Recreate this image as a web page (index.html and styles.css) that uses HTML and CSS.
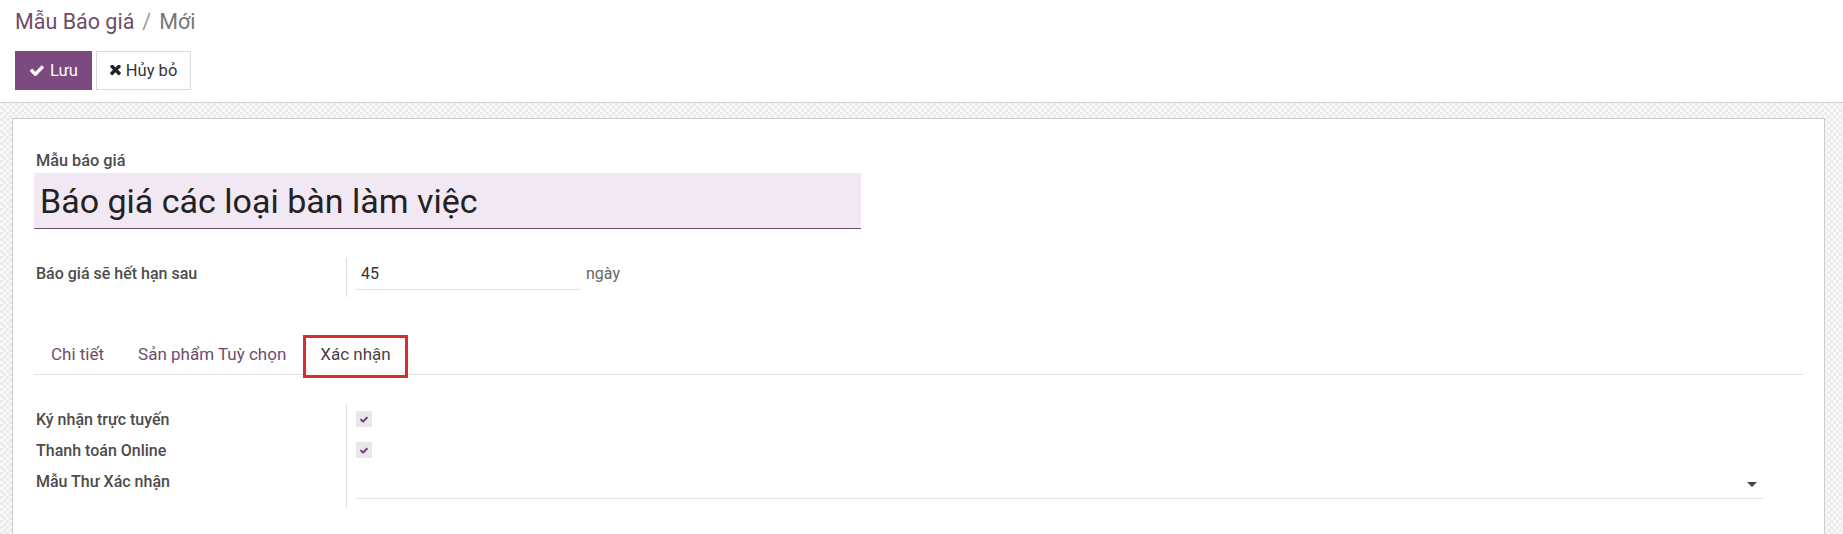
FILE: index.html
```html
<!DOCTYPE html>
<html lang="vi">
<head>
<meta charset="utf-8">
<title>Mẫu Báo giá / Mới</title>
<link rel="stylesheet" href="styles.css">
</head>
<body>
<header class="control-panel">
  <ol class="breadcrumb">
    <li class="crumb crumb-link">Mẫu Báo giá</li>
    <li class="crumb-sep">/</li>
    <li class="crumb crumb-active">Mới</li>
  </ol>
  <div class="buttons">
    <button class="btn btn-primary" type="button">
      <svg class="icon icon-check" viewBox="120 330 1560 1110" aria-hidden="true"><path d="M1671 566q0 40-28 68l-724 724-136 136q-28 28-68 28t-68-28l-136-136-362-362q-28-28-28-68t28-68l136-136q28-28 68-28t68 28l294 295 656-657q28-28 68-28t68 28l136 136q28 28 28 68z"/></svg>Lưu
    </button>
    <button class="btn btn-secondary" type="button">
      <svg class="icon icon-times" viewBox="100 330 1210 1160" aria-hidden="true"><path d="M1298 1202q0 40-28 68l-136 136q-28 28-68 28t-68-28l-294-294-294 294q-28 28-68 28t-68-28l-136-136q-28-28-28-68t28-68l294-294-294-294q-28-28-28-68t28-68l136-136q28-28 68-28t68 28l294 294 294-294q28-28 68-28t68 28l136 136q28 28 28 68t-28 68l-294 294 294 294q28 28 28 68z"/></svg>Hủy bỏ
    </button>
  </div>
</header>
<main class="content">
  <div class="sheet">
    <div class="title-label">Mẫu báo giá</div>
    <div class="title-field">Báo giá các loại bàn làm việc</div>

    <div class="group group-validity">
      <div class="cell-label">Báo giá sẽ hết hạn sau</div>
      <div class="cell-value">
        <span class="input input-days">45</span><span class="unit">ngày</span>
      </div>
    </div>

    <ul class="tabs">
      <li class="tab">Chi tiết</li>
      <li class="tab">Sản phẩm Tuỳ chọn</li>
      <li class="tab tab-active">Xác nhận</li>
    </ul>

    <div class="group group-confirm">
      <div class="cell-label">Ký nhận trực tuyến</div>
      <div class="cell-value">
        <span class="checkbox"><svg viewBox="120 330 1560 1110" aria-hidden="true"><path d="M1671 566q0 40-28 68l-724 724-136 136q-28 28-68 28t-68-28l-136-136-362-362q-28-28-28-68t28-68l136-136q28-28 68-28t68 28l294 295 656-657q28-28 68-28t68 28l136 136q28 28 28 68z"/></svg></span>
      </div>
      <div class="cell-label">Thanh toán Online</div>
      <div class="cell-value">
        <span class="checkbox"><svg viewBox="120 330 1560 1110" aria-hidden="true"><path d="M1671 566q0 40-28 68l-724 724-136 136q-28 28-68 28t-68-28l-136-136-362-362q-28-28-28-68t28-68l136-136q28-28 68-28t68 28l294 295 656-657q28-28 68-28t68 28l136 136q28 28 28 68z"/></svg></span>
      </div>
      <div class="cell-label cell-label-last">Mẫu Thư Xác nhận</div>
      <div class="cell-value cell-value-last">
        <span class="input select-field"><span class="caret"></span></span>
      </div>
    </div>
  </div>
</main>
</body>
</html>
```

FILE: styles.css
```css
* { box-sizing: border-box; }

html, body {
  margin: 0;
  padding: 0;
  background: #fff;
}

body {
  font-family: Roboto, "Noto Sans", "Liberation Sans", sans-serif;
  font-size: 16px;
  line-height: 24px;
  color: #4c4c4c;
  width: 1843px;
  height: 534px;
  overflow: hidden;
  display: flex;
  flex-direction: column;
}

/* ---------- control panel ---------- */
.control-panel {
  padding: 7px 15px 12px;
  border-bottom: 1px solid #cfcfcf;
  background: #fff;
}

.breadcrumb {
  list-style: none;
  margin: 0;
  padding: 0;
  display: flex;
  align-items: baseline;
  font-size: 21.5px;
  line-height: 30px;
}

.crumb-link { color: #6f4c6c; }
.crumb-sep { color: #9a9a9a; margin: 0 8px 0 8px; }
.crumb-active { color: #777; }

.buttons {
  display: flex;
  gap: 4px;
  margin-top: 14px;
}

.btn {
  font-family: inherit;
  font-size: 16.5px;
  line-height: 24px;
  height: 39px;
  margin: 0;
  display: flex;
  align-items: center;
  border-radius: 0;
  cursor: pointer;
}

.btn-primary {
  background: #7c4a7e;
  border: 1px solid #7c4a7e;
  color: #fff;
  padding: 0 13px 0 14px;
}

.btn-secondary {
  background: #fff;
  border: 1px solid #dcdcdc;
  color: #333;
  padding: 0 13px 0 13px;
}

.icon { fill: currentColor; display: block; }
.icon-check { width: 14px; height: 11px; margin-right: 6px; }
.icon-times { width: 11px; height: 11px; margin-right: 5px; color: #222; }

/* ---------- content ---------- */
.content {
  flex: 1;
  padding: 15px 18px 0 12px;
  background-color: #f3f3f3;
  background-image: conic-gradient(#ebebeb 25%, #f8f8f8 0 50%, #ebebeb 0 75%, #f8f8f8 0);
  background-size: 6px 6px;
}

.sheet {
  background: #fff;
  border: 1px solid #cbcbcb;
  border-bottom: 0;
  height: 100%;
  padding: 30px 21px 0 22px;
}

.title-label {
  font-weight: 500;
  font-size: 16.3px;
  color: #4c4c4c;
  padding-left: 1px;
}

.title-field {
  width: 827px;
  margin-left: -1px;
  background: #f2e8f3;
  border-bottom: 1px solid #714b67;
  font-size: 34px;
  line-height: 48px;
  padding: 4px 0 3px 6px;
  color: #222;
}

/* ---------- groups ---------- */
.group {
  display: grid;
  grid-template-columns: 313px 1fr;
  margin-left: -1px;
  margin-right: 32px;
}

.cell-label {
  border-right: 1px solid #dedede;
  padding: 4px 0 0 2px;
  font-weight: 500;
  color: #4c4c4c;
}

.cell-value {
  padding: 0 8px;
  display: flex;
  align-items: flex-start;
}

.group-validity {
  margin-top: 29px;
}

.group-validity .cell-label,
.group-validity .cell-value {
  height: 39px;
}

.input {
  display: block;
  padding: 4px 0 3px;
  border-bottom: 1px solid #e4e4e4;
  line-height: 24px;
  color: #333;
}

.input-days {
  width: 226px;
  padding-left: 6px;
}

.unit {
  margin-left: 5px;
  padding-top: 4px;
  color: #666;
}

/* ---------- tabs ---------- */
.tabs {
  list-style: none;
  margin: 38px 0 0 -1px;
  padding: 0;
  display: flex;
  border-bottom: 1px solid #dee2e6;
  font-size: 17px;
}

.tab {
  border: 1px solid transparent;
  border-bottom: 0;
  padding: 6px 16px 8px;
  color: #6f4c6c;
  margin-bottom: -1px;
}

.tab-active {
  position: relative;
  background: #fff;
  border-color: #dee2e6;
  color: #444;
  padding-bottom: 9px;
}

.tab-active::after {
  content: "";
  position: absolute;
  left: -1px;
  right: -1px;
  top: -1px;
  height: 37px;
  border: 3px solid #db2b30;
}

/* ---------- confirmation group ---------- */
.group-confirm {
  margin-top: 30px;
}

.group-confirm .cell-label {
  height: 31px;
  padding-top: 3px;
}

.group-confirm .cell-value {
  height: 31px;
  padding-top: 6px;
}

.group-confirm .cell-label-last {
  height: 40px;
  padding-top: 3px;
}

.group-confirm .cell-value-last {
  height: 40px;
  padding-top: 0;
}

.checkbox {
  width: 16px;
  height: 16px;
  margin-left: 1px;
  background: #e9e7ee;
  display: flex;
  align-items: center;
  justify-content: center;
  fill: #6b4473;
}

.checkbox svg {
  width: 8px;
  height: 7px;
  display: block;
}

.select-field {
  position: relative;
  flex: 1;
  height: 32px;
}

.caret {
  position: absolute;
  right: 6px;
  top: 15px;
  width: 0;
  height: 0;
  border-top: 5px solid #444;
  border-left: 5px solid transparent;
  border-right: 5px solid transparent;
}
```
